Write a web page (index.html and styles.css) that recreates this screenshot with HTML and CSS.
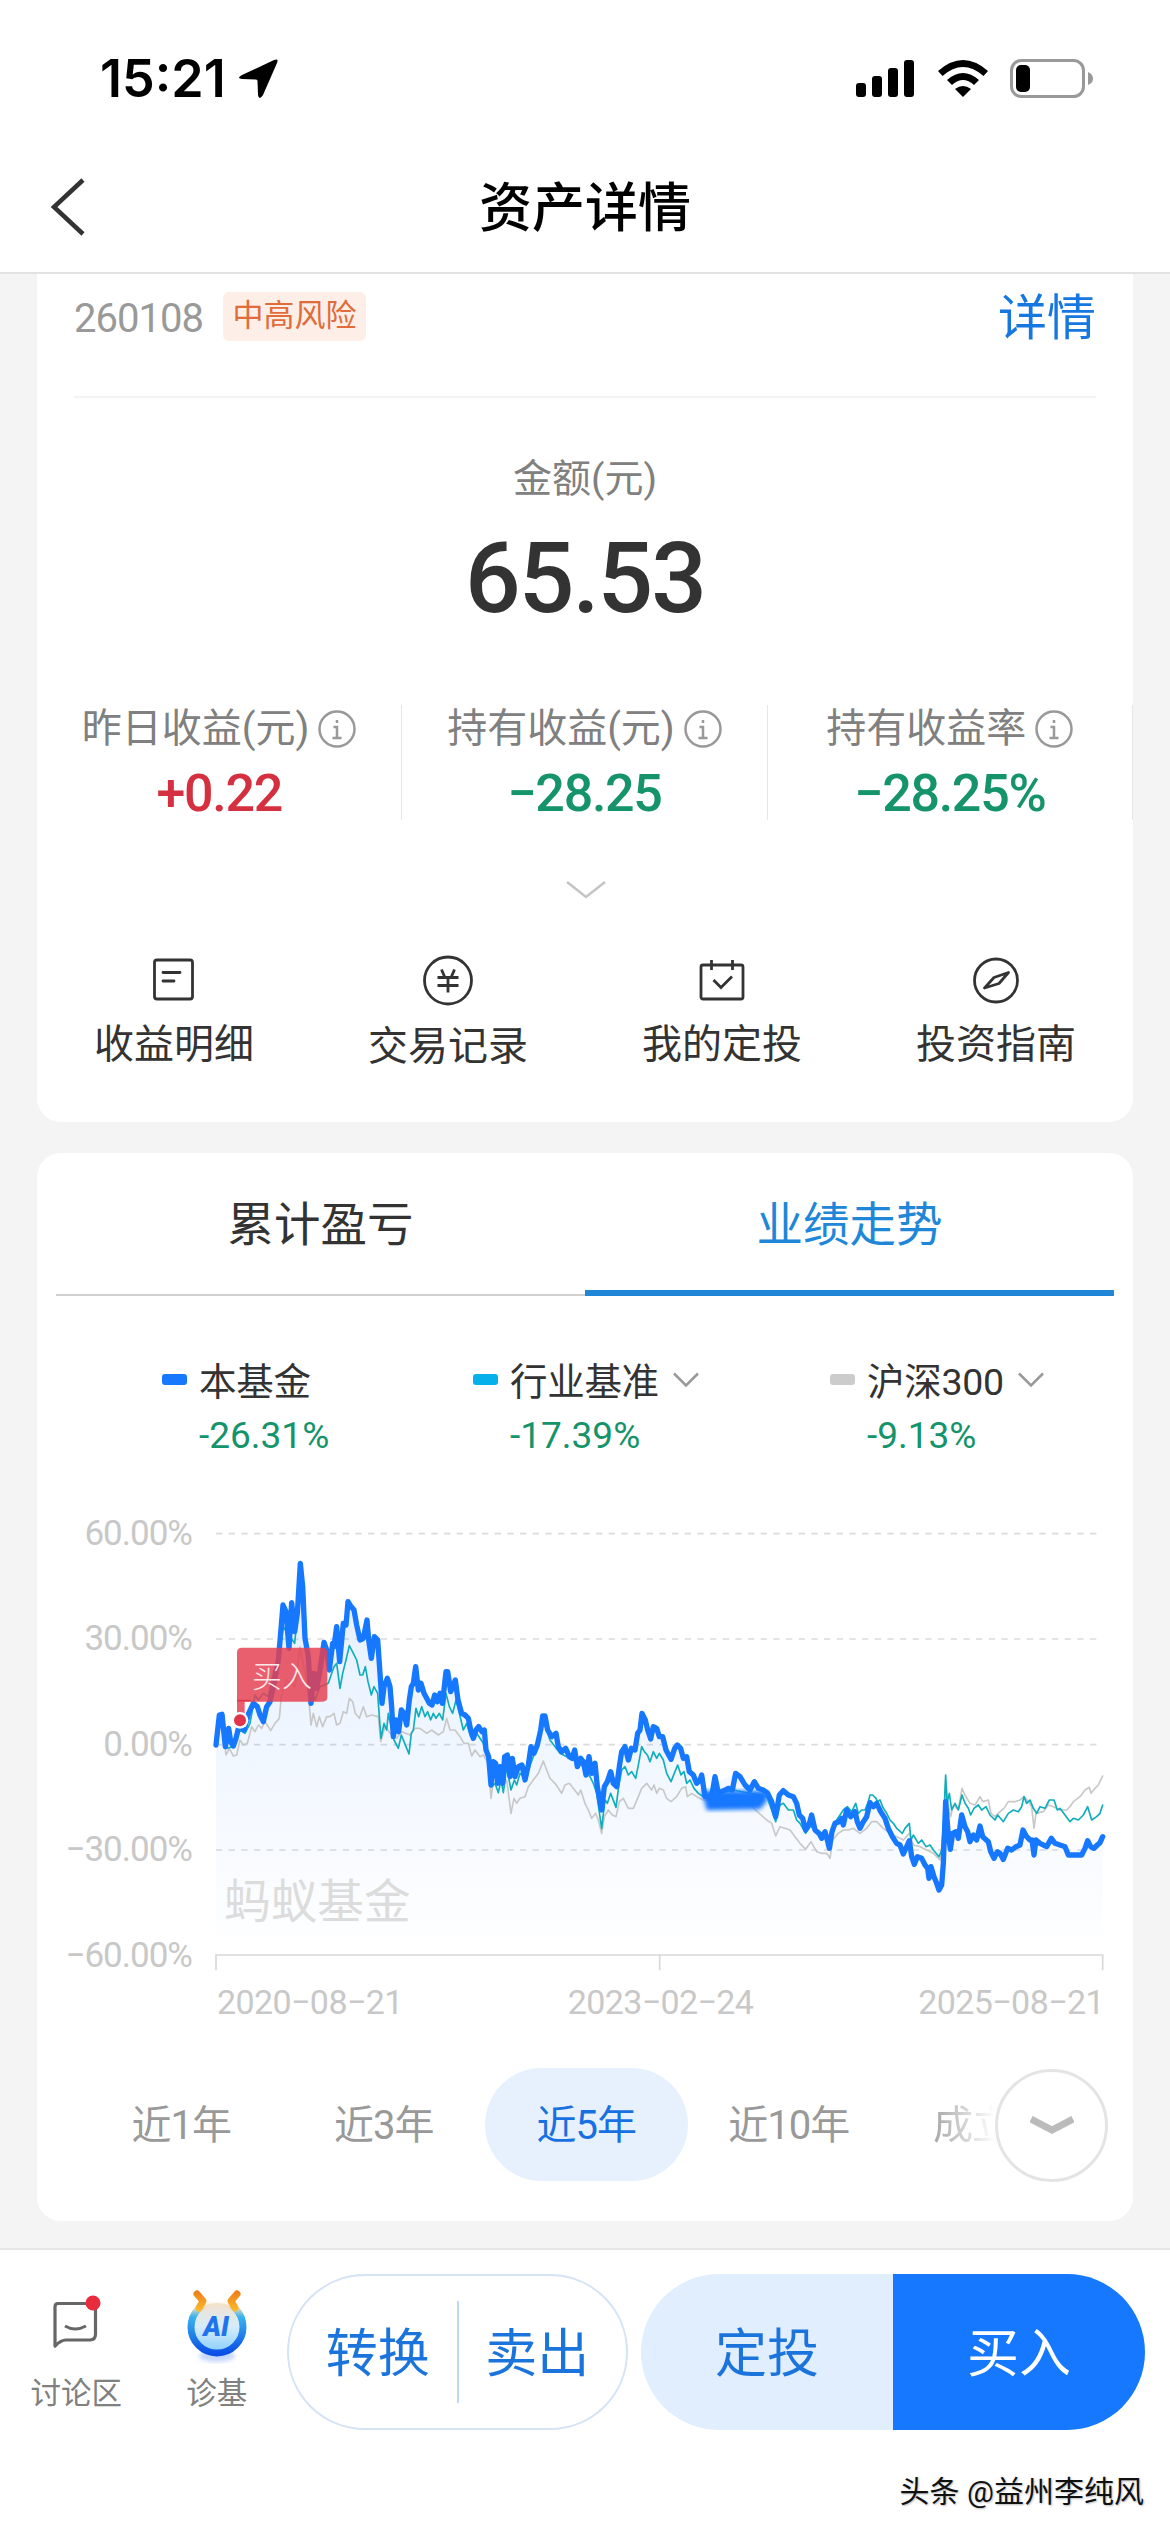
FILE: index.html
```html
<!DOCTYPE html>
<html lang="zh-CN">
<head>
    <meta charset="UTF-8">
    <meta name="viewport" content="width=device-width, initial-scale=1.0">
    <title>资产详情</title>
    <link rel="stylesheet" href="styles.css">
</head>
<body>
    <div class="status-bar">
        <div class="status-left">
            <span class="time">15:21</span>
            <svg width="42" height="42" viewBox="0 0 42 42"><path d="M37 2 Q42 0 40 5 L26 37 Q22 43 21 37 L20.500 23 Q20.500 21.500 19 21.500 L5 21 Q-1 20 5 17 Z" fill="#000"/></svg>
        </div>
        <div class="status-right">
            <svg width="58" height="38" viewBox="0 0 58 38">
                <rect x="0" y="23" width="10" height="14" rx="3"/>
                <rect x="16" y="16" width="10" height="21" rx="3"/>
                <rect x="32" y="8" width="10" height="29" rx="3"/>
                <rect x="48" y="0" width="10" height="37" rx="3"/>
            </svg>
            <svg class="wifi" width="50" height="38" viewBox="0 0 50 38">
                <path d="M0 11 Q25 -11 50 11 L45.500 16 Q25 -2 4.500 16 Z"/>
                <path d="M9 20 Q25 6 41 20 L36 25 Q25 15 14 25 Z"/>
                <path d="M17 29 Q25 23 33 29 L25 37 Z"/>
            </svg>
            <svg width="83" height="40" viewBox="0 0 83 40">
                <rect x="1.500" y="1.500" width="72" height="36" rx="10" fill="none" stroke="#999" stroke-width="3"/>
                <rect x="6" y="6" width="14" height="27" rx="5"/>
                <path d="M78 13 Q83 15 83 19.500 Q83 24 78 26 Z" fill="#999"/>
            </svg>
        </div>
    </div>

    <div class="nav">
        <svg class="back" width="36" height="60" viewBox="0 0 36 60"><path d="M33 3 L4 30 L33 57" fill="none" stroke="#333" stroke-width="4.500"/></svg>
        <h1>资产详情</h1>
    </div>

    <div class="main">
        <div class="card asset">
            <div class="fund-row">
                <span class="code">260108</span>
                <span class="risk">中高风险</span>
                <a class="detail">详情</a>
            </div>
            <div class="amount-label">金额(元)</div>
            <div class="amount">65.53</div>
            <div class="stats">
                <div class="stat">
                    <div class="stat-label">昨日收益(元)<svg class="info" viewBox="0 0 38 38"><circle cx="19" cy="19" r="17.500"/><path d="M19 10v3M15.500 17h3.500v11M14.500 28h9"/></svg></div>
                    <div class="stat-value up">+0.22</div>
                </div>
                <div class="stat">
                    <div class="stat-label">持有收益(元)<svg class="info" viewBox="0 0 38 38"><circle cx="19" cy="19" r="17.500"/><path d="M19 10v3M15.500 17h3.500v11M14.500 28h9"/></svg></div>
                    <div class="stat-value down">−28.25</div>
                </div>
                <div class="stat">
                    <div class="stat-label">持有收益率<svg class="info" viewBox="0 0 38 38"><circle cx="19" cy="19" r="17.500"/><path d="M19 10v3M15.500 17h3.500v11M14.500 28h9"/></svg></div>
                    <div class="stat-value down">−28.25%</div>
                </div>
            </div>
            <svg class="expand" width="40" height="18" viewBox="0 0 40 18"><path d="M1 1 L20 16 L39 1" fill="none" stroke="#c4c4c4" stroke-width="2.500"/></svg>
            <div class="actions">
                <div class="action">
                    <svg viewBox="0 0 56 56"><rect x="8.500" y="8" width="38" height="39" rx="2.500"/><path d="M17 20.500h17M17 29h11" stroke-linecap="round"/></svg>
                    <span>收益明细</span>
                </div>
                <div class="action">
                    <svg viewBox="0 0 56 56"><circle cx="28" cy="28.500" r="23.500"/><path d="M21.500 17.500l3 7M34.500 17.500l-3 7M17.500 25.500h21M17.500 33.500h21M28 25.500v15"/></svg>
                    <span class="low">交易记录</span>
                </div>
                <div class="action">
                    <svg viewBox="0 0 56 56"><rect x="7" y="13" width="42" height="34" rx="2"/><path d="M17.500 8v10M38.500 8v10M19.500 28l7.500 7.500 11-11"/></svg>
                    <span>我的定投</span>
                </div>
                <div class="action">
                    <svg viewBox="0 0 56 56"><circle cx="28" cy="28.500" r="21.500"/><path d="M40.500 20.500 L26 25.500 L16.500 36 L31 31.500 Z" stroke-linejoin="round"/></svg>
                    <span>投资指南</span>
                </div>
            </div>
        </div>

        <div class="card trend">
            <div class="tabs">
                <div class="tab">累计盈亏</div>
                <div class="tab active">业绩走势</div>
            </div>

            <div class="legend">
                <div class="legend-item">
                    <div class="legend-name"><i class="mark fund"></i>本基金</div>
                    <div class="legend-value">-26.31%</div>
                </div>
                <div class="legend-item wide">
                    <div class="legend-name"><i class="mark bench"></i>行业基准<svg class="caret" viewBox="0 0 26 16"><path d="M1 1.500 L13 13.500 L25 1.500"/></svg></div>
                    <div class="legend-value">-17.39%</div>
                </div>
                <div class="legend-item">
                    <div class="legend-name"><i class="mark index"></i>沪深300<svg class="caret" viewBox="0 0 26 16"><path d="M1 1.500 L13 13.500 L25 1.500"/></svg></div>
                    <div class="legend-value">-9.13%</div>
                </div>
            </div>

            <div class="chart">
                <div class="y-axis">
                    <span>60.00%</span>
                    <span>30.00%</span>
                    <span>0.00%</span>
                    <span>−30.00%</span>
                    <span>−60.00%</span>
                </div>
                <svg class="plot" width="920" height="475" viewBox="0 0 2760 1425">
                    <defs>
                        <linearGradient id="area" gradientUnits="userSpaceOnUse" x1="0" y1="190" x2="0" y2="1365">
                            <stop offset="0" stop-color="#1677ff" stop-opacity="0.12"/>
                            <stop offset="1" stop-color="#1677ff" stop-opacity="0"/>
                        </linearGradient>
                        <filter id="soft"><feGaussianBlur stdDeviation="6"/></filter>
                    </defs>
                    <g class="grid">
                        <path d="M48 101H2708M48 417H2708M48 734H2708M48 1050H2708"/>
                    </g>
                    <path class="axis" d="M48 1411V1365H2708V1411M1379 1365V1411"/>
                    <path fill="url(#area)" d="M48,1365 48,735 58,645 76,740 120,665 146,640 200,620 220,560 235,480 249,315 267,445 275,308 284,395 301,190 315,415 333,610 372,427 388,510 410,380 419,485 444,305 462,330 480,420 501,360 514,475 523,410 533,420 546,610 562,535 580,710 604,630 620,675 647,500 688,610 727,610 738,515 766,540 785,640 820,715 836,680 853,690 873,855 914,770 975,840 1028,648 1075,740 1132,800 1175,820 1205,930 1232,815 1250,860 1265,755 1305,750 1326,640 1352,717 1388,710 1413,778 1432,735 1468,815 1515,890 1545,850 1607,820 1650,870 1703,880 1727,950 1750,872 1790,910 1817,990 1835,945 1888,1045 1896,995 1940,930 1980,985 2010,908 2030,910 2077,1010 2110,1062 2128,1022 2143,1093 2217,1170 2230,1090 2237,905 2251,1048 2285,945 2310,1025 2340,978 2382,1075 2469,990 2502,1065 2554,1015 2605,1065 2663,1022 2708,1010 2708,1365Z"/>
                    <text class="brand" x="72" y="1253">蚂蚁基金</text>
                    <polyline class="line-index" points="48,735 65,660 78,765 88,745 100,768 110,765 120,720 130,735 142,730 155,680 165,695 175,675 185,685 195,665 205,680 212,692 225,670 238,655 244,590 260,540 285,560 300,440 315,520 325,580 333,675 340,640 350,680 358,650 368,680 380,650 390,650 402,640 410,675 420,670 430,635 440,640 448,595 458,605 466,640 478,655 490,620 500,650 515,645 535,650 542,725 555,680 575,705 590,715 605,695 630,705 645,685 660,685 680,700 695,690 715,705 730,695 740,655 750,690 765,690 780,710 792,730 805,730 815,768 825,750 840,770 850,765 865,790 873,895 880,845 895,840 910,850 920,840 933,940 942,895 950,910 960,895 975,890 985,860 1000,840 1015,820 1030,783 1040,810 1050,835 1065,850 1085,880 1095,855 1108,850 1120,865 1135,885 1142,870 1155,910 1165,930 1175,955 1187,940 1195,960 1205,1000 1213,950 1225,930 1237,945 1248,950 1258,905 1270,895 1285,925 1300,925 1315,890 1325,865 1340,850 1355,870 1362,855 1370,880 1378,865 1390,870 1400,895 1413,905 1430,890 1445,865 1457,860 1462,890 1475,880 1490,890 1510,900 1560,905 1600,885 1650,915 1700,960 1715,970 1727,1008 1740,980 1755,985 1770,990 1785,1010 1800,1030 1817,1048 1833,1025 1850,1055 1865,1060 1880,1060 1890,1075 1898,1020 1915,1000 1930,990 1945,990 1960,985 1980,1000 2000,985 2015,965 2030,965 2050,985 2070,1000 2090,1010 2110,1020 2128,1000 2140,1035 2160,1040 2180,1050 2200,1060 2220,1080 2230,1000 2237,840 2245,920 2252,950 2260,915 2275,930 2286,865 2295,885 2310,910 2325,915 2340,890 2348,905 2365,900 2373,940 2385,950 2400,935 2412,925 2425,905 2445,905 2460,900 2472,890 2485,905 2495,920 2502,985 2508,940 2530,935 2545,915 2560,920 2580,930 2600,930 2610,920 2620,905 2640,890 2655,870 2668,862 2673,880 2685,865 2695,855 2708,828"/>
                    <polyline class="line-bench" points="48,735 60,660 78,745 100,740 120,690 135,700 150,670 165,585 175,600 190,580 205,590 215,540 240,450 250,380 262,400 284,430 301,250 318,420 330,560 345,600 360,560 385,550 395,520 402,500 410,490 420,565 428,520 438,480 448,437 460,460 470,480 480,525 488,525 496,500 504,545 514,585 522,560 533,580 538,650 543,715 552,670 560,690 565,640 575,690 582,720 595,745 604,705 612,725 618,740 627,762 634,700 640,690 648,625 656,650 665,620 675,650 683,635 692,660 700,640 708,655 718,640 728,660 738,580 748,620 758,640 768,600 778,640 790,690 800,670 812,710 830,700 850,730 866,790 875,860 885,850 895,878 903,840 910,878 920,800 933,870 943,840 950,855 960,820 975,835 1000,770 1030,665 1050,720 1080,760 1120,780 1150,800 1170,830 1180,850 1190,880 1197,930 1205,985 1215,900 1222,910 1232,880 1248,922 1256,860 1265,810 1275,800 1285,825 1295,815 1307,835 1316,790 1325,740 1333,755 1342,765 1350,785 1360,755 1370,775 1378,760 1390,780 1400,820 1413,845 1425,815 1433,795 1443,825 1452,815 1460,850 1470,840 1482,865 1495,880 1510,890 1600,870 1700,890 1715,930 1727,965 1740,915 1750,910 1765,930 1780,930 1790,960 1800,970 1817,1000 1830,975 1850,1000 1865,1000 1880,1020 1888,1040 1896,990 1910,960 1930,930 1942,920 1955,935 1967,910 1975,940 1985,930 1995,930 2005,905 2010,885 2018,885 2028,895 2032,905 2040,900 2050,925 2060,940 2070,960 2080,970 2090,985 2107,1000 2115,985 2128,970 2133,1020 2140,1005 2155,1030 2165,1020 2178,1040 2190,1035 2200,1050 2217,1070 2225,1050 2230,980 2237,825 2241,910 2248,880 2255,930 2265,910 2275,930 2286,885 2295,910 2305,925 2312,945 2322,925 2335,915 2345,930 2358,920 2370,945 2385,960 2393,945 2410,965 2425,940 2440,930 2455,935 2465,920 2472,890 2480,910 2490,900 2500,925 2510,940 2520,920 2535,925 2548,900 2562,900 2572,930 2580,925 2595,945 2610,965 2620,955 2635,960 2650,945 2663,920 2675,960 2690,950 2700,940 2708,915"/>
                    <polyline class="line-fund" points="48,735 58,645 66,643 76,740 86,685 92,725 100,738 108,715 120,665 132,690 146,640 160,610 172,620 180,645 190,665 200,620 210,605 220,560 235,480 242,400 249,315 258,335 267,445 275,308 284,395 292,340 301,190 308,260 315,415 325,470 333,610 342,520 350,565 360,510 372,427 380,450 388,510 398,430 402,440 410,380 419,485 430,370 438,375 444,305 452,318 462,330 470,375 480,420 490,415 501,360 506,420 514,475 523,410 533,420 540,520 546,610 552,560 562,535 570,560 575,620 580,710 588,660 596,695 604,630 612,640 620,675 628,600 634,560 640,550 647,500 655,570 663,550 672,580 680,595 688,610 696,615 704,585 712,605 720,580 727,610 733,560 738,515 743,515 752,575 760,555 766,540 774,600 785,640 795,645 805,655 812,690 820,715 828,690 836,680 846,695 853,690 858,750 866,770 873,855 880,785 887,790 893,850 900,800 908,850 914,770 922,765 930,830 937,775 945,830 955,800 966,795 975,840 985,795 993,740 1002,760 1012,735 1022,690 1028,648 1035,648 1043,690 1055,710 1068,700 1075,740 1085,755 1097,745 1108,770 1116,775 1124,750 1132,800 1142,775 1150,785 1158,825 1167,770 1175,820 1185,790 1192,860 1199,900 1205,930 1213,860 1222,845 1232,815 1240,850 1250,860 1258,800 1265,755 1275,740 1285,780 1294,745 1305,750 1313,700 1320,690 1326,640 1336,660 1343,690 1352,717 1360,680 1370,685 1378,710 1388,710 1398,750 1413,778 1424,745 1432,735 1442,745 1450,775 1460,770 1468,815 1480,825 1490,850 1500,840 1505,825 1515,890 1535,890 1545,830 1555,880 1585,865 1597,870 1607,820 1620,830 1635,855 1650,870 1663,845 1675,865 1690,870 1703,880 1715,905 1727,950 1738,885 1750,872 1765,885 1780,890 1790,910 1798,945 1808,955 1817,990 1827,975 1835,945 1845,990 1857,1000 1865,1015 1875,995 1882,1020 1888,1045 1896,995 1905,970 1917,965 1925,955 1930,975 1940,930 1952,950 1965,935 1972,965 1980,985 1990,965 2000,950 2010,908 2020,920 2030,910 2042,935 2055,955 2065,985 2077,1010 2090,1030 2100,1035 2110,1062 2120,1040 2128,1022 2135,1070 2143,1093 2152,1070 2165,1075 2175,1095 2183,1105 2187,1135 2193,1100 2202,1130 2210,1150 2217,1170 2225,1155 2230,1090 2237,905 2244,995 2251,1048 2258,1000 2268,995 2275,1015 2285,945 2295,980 2303,995 2310,1025 2320,1005 2330,1020 2340,978 2348,1010 2365,1025 2372,1055 2382,1075 2392,1055 2400,1060 2410,1078 2423,1045 2435,1050 2448,1040 2460,1035 2469,990 2480,1010 2490,1020 2496,1020 2502,1065 2508,1020 2520,1030 2540,1040 2554,1015 2565,1030 2580,1035 2595,1040 2605,1065 2620,1065 2645,1065 2655,1045 2663,1022 2672,1040 2682,1045 2692,1035 2700,1028 2708,1010"/>
                    <path class="smudge" d="M1505 872 L1703 872 L1700 905 L1680 928 L1520 931 Z" filter="url(#soft)"/>
                    <path class="flag" d="M126 443H368Q382 443 382 457V591Q382 605 368 605H134V640H111V458Q111 443 126 443Z"/>
                    <path class="flag-line" d="M111 602H152"/>
                    <text class="flag-text" x="156" y="561">买入</text>
                    <circle cx="120" cy="661" r="25" fill="#fff"/>
                    <circle cx="120" cy="661" r="18" fill="#e1354a"/>
                </svg>
            </div>
            <div class="x-axis">
                <span>2020−08−21</span>
                <span>2023−02−24</span>
                <span>2025−08−21</span>
            </div>

            <div class="ranges">
                <div class="range">近1年</div>
                <div class="range">近3年</div>
                <div class="range active">近5年</div>
                <div class="range">近10年</div>
                <div class="range last">成立</div>
                <div class="more"><svg width="44" height="22" viewBox="0 0 44 22"><path d="M1 4 L22 15 L43 4" fill="none" stroke="#bbb" stroke-width="7"/></svg></div>
            </div>
        </div>
    </div>

    <div class="bottom-bar">
        <div class="tool">
            <svg width="64" height="76" viewBox="0 0 64 76">
                <path d="M14 15.500 H46 Q51.500 15.500 51.500 21 V46 Q51.500 52 46 52 H22 Q17 52 11 58 V19 Q11 15.500 14 15.500Z" fill="none" stroke="#666" stroke-width="3.200" stroke-linejoin="round"/>
                <path d="M21 38 Q31 44 42 38" fill="none" stroke="#666" stroke-width="3"/>
                <circle cx="49" cy="15" r="7.500" fill="#e92b3d"/>
            </svg>
            <span>讨论区</span>
        </div>
        <div class="tool">
            <svg width="64" height="76" viewBox="0 0 64 76">
                <defs>
                    <linearGradient id="ring" x1="0" y1="0" x2="0" y2="1"><stop offset="0" stop-color="#f6e6cf" stop-opacity="0"/><stop offset="0.120" stop-color="#f6dcb4"/><stop offset="0.300" stop-color="#39b4ee"/><stop offset="1" stop-color="#0a4fe6"/></linearGradient>
                    <linearGradient id="face" x1="0" y1="0" x2="0" y2="1"><stop offset="0" stop-color="#f3e2cf"/><stop offset="0.500" stop-color="#d5ecfb"/><stop offset="1" stop-color="#8fd0fb"/></linearGradient>
                    <linearGradient id="horn" gradientUnits="userSpaceOnUse" x1="0" y1="3" x2="0" y2="22"><stop offset="0" stop-color="#ee7d18"/><stop offset="1" stop-color="#fbb92c"/></linearGradient>
                    <filter id="glow"><feGaussianBlur stdDeviation="2"/></filter>
                </defs>
                <ellipse cx="32" cy="68" rx="18" ry="6" fill="#c5d6fb" filter="url(#glow)"/>
                <circle cx="32" cy="39" r="24" fill="url(#face)"/>
                <circle cx="32" cy="39" r="26" fill="none" stroke="url(#ring)" stroke-width="7"/>
                <path d="M12 6 L18 13 L14 20 M52 6 L46 13 L50 20" fill="none" stroke="url(#horn)" stroke-width="7" stroke-linecap="round" stroke-linejoin="round"/>
                <text x="31" y="48" class="ai">AI</text>
            </svg>
            <span>诊基</span>
        </div>
        <div class="pill outline">
            <div class="btn">转换</div>
            <div class="btn">卖出</div>
        </div>
        <div class="pill solid">
            <div class="btn light">定投</div>
            <div class="btn primary">买入</div>
        </div>
        <div class="author">头条 @益州李纯风</div>
    </div>
</body>
</html>
```
FILE: styles.css
```css
* {
    box-sizing: border-box;
    margin: 0;
    padding: 0;
}

body {
    width: 1170px;
    height: 2532px;
    overflow: hidden;
    background: #fff;
    color: #333;
    font-family: Roboto, "Noto Sans CJK SC", sans-serif;
}

svg {
    display: block;
    flex-shrink: 0;
}

.status-bar {
    height: 141px;
    padding: 16px 77px 0 100px;
    display: flex;
    justify-content: space-between;
    align-items: center;
}

.status-left,
.status-right {
    display: flex;
    align-items: center;
}

.time {
    width: 137px;
    font-family: Inter, sans-serif;
    font-weight: 600;
    font-size: 52px;
    letter-spacing: 0;
    color: #000;
}

.wifi {
    margin: 0 22px 0 24px;
}

.nav {
    height: 133px;
    padding-top: 5px;
    border-bottom: 2px solid #e2e2e2;
    display: flex;
    align-items: center;
    justify-content: center;
    position: relative;
}

.nav h1 {
    font-size: 53px;
    font-weight: 500;
    line-height: 60px;
    color: #000;
}

.back {
    position: absolute;
    left: 50px;
    top: 36px;
}

.main {
    height: 1974px;
    padding: 0 37px;
    background: #f4f4f4;
}

.card {
    background: #fff;
    border-radius: 24px;
}

.asset {
    height: 848px;
    border-radius: 0 0 24px 24px;
}

.fund-row {
    height: 124px;
    margin: 0 37px;
    padding-bottom: 38px;
    border-bottom: 2px solid #f3f3f3;
    display: flex;
    align-items: center;
}

.code {
    width: 149px;
    padding-top: 4px;
    font-size: 40px;
    letter-spacing: -1px;
    color: #999;
}

.risk {
    width: 143px;
    height: 49px;
    border-radius: 6px;
    background: #fdeee8;
    color: #df6c3a;
    font-size: 31px;
    line-height: 48px;
    text-align: center;
}

.detail {
    margin-left: auto;
    padding-top: 6px;
    font-size: 49px;
    line-height: 60px;
    color: #1777e0;
}

.amount-label {
    margin-top: 51px;
    font-size: 39px;
    line-height: 60px;
    text-align: center;
    color: #808080;
}

.amount {
    margin-top: 20px;
    font-size: 98px;
    font-weight: 500;
    line-height: 100px;
    letter-spacing: -2px;
    text-align: center;
}

.stats {
    height: 115px;
    margin-top: 76px;
    display: flex;
}

.stat {
    flex: 1;
    border-right: 1px solid #e6e6e6;
}

.stat-label {
    padding-top: 1px;
    display: flex;
    justify-content: center;
    align-items: center;
    font-size: 40px;
    line-height: 46px;
    white-space: nowrap;
    color: #808080;
}

.info {
    width: 38px;
    height: 38px;
    margin-left: 9px;
    fill: none;
    stroke: #999;
    stroke-width: 2.5;
}

.stat-value {
    margin-top: 10px;
    font-size: 52px;
    font-weight: 500;
    line-height: 64px;
    letter-spacing: -1.3px;
    text-align: center;
}

.up {
    color: #d5303f;
}

.down {
    color: #15946b;
}

.expand {
    margin: 61px auto 0;
    position: relative;
    left: 1px;
}

.actions {
    margin-top: 53px;
    display: flex;
}

.action {
    flex: 1;
    display: flex;
    flex-direction: column;
    align-items: center;
    gap: 12px;
    font-size: 40px;
    line-height: 50px;
}

.action .low {
    padding-top: 2px;
}

.action svg {
    width: 56px;
    height: 56px;
    fill: none;
    stroke: #333;
    stroke-width: 2.8;
}

.trend {
    height: 1068px;
    margin-top: 31px;
    overflow: hidden;
}

.tabs {
    height: 144px;
    margin: 0 19px;
    display: flex;
}

.tab {
    flex: 1;
    height: 143px;
    border-bottom: 2px solid #d0d0d0;
    font-size: 46.5px;
    line-height: 144px;
    text-align: center;
}

.tab.active {
    border-bottom: 6px solid #2087d8;
    color: #2087d8;
}

.legend {
    margin-top: 60px;
    padding-left: 125px;
    display: flex;
}

.legend-item {
    width: 311px;
    flex-shrink: 0;
}

.legend-item.wide {
    width: 357px;
}

.legend-name {
    display: flex;
    align-items: center;
    font-size: 37.5px;
    line-height: 50px;
    letter-spacing: -0.3px;
    white-space: nowrap;
}

.mark {
    width: 25px;
    height: 11px;
    margin: -6px 12px 0 0;
    border-radius: 3px;
}

.fund {
    background: #1677ff;
}

.bench {
    background: #06b0ea;
}

.index {
    background: #ccc;
}

.caret {
    width: 26px;
    height: 16px;
    margin: -4px 0 0 14px;
    fill: none;
    stroke: #999;
    stroke-width: 2.5;
}

.legend-value {
    margin: 4px 0 0 37px;
    font-size: 37px;
    line-height: 50px;
    letter-spacing: 0;
    color: #15946b;
}

.chart {
    height: 494px;
    margin-top: 20px;
    display: flex;
}

.y-axis {
    width: 155px;
    flex-shrink: 0;
    display: flex;
    flex-direction: column;
    font-size: 35px;
    line-height: 105.4px;
    letter-spacing: -1px;
    text-align: right;
    white-space: nowrap;
    color: #c8c8c8;
}

.plot {
    margin: 19px 0 0 8px;
}

.grid path {
    fill: none;
    stroke: #dcdcdc;
    stroke-width: 5;
    stroke-dasharray: 19 19;
}

.axis {
    fill: none;
    stroke: #d8d8d8;
    stroke-width: 5;
}

.brand {
    font-size: 140px;
    font-weight: 400;
    fill: #dcdcdc;
}

.line-index,
.line-bench,
.line-fund {
    fill: none;
    stroke-linejoin: round;
    stroke-linecap: round;
}

.line-index {
    stroke: #c8c8c8;
    stroke-width: 5;
}

.line-bench {
    stroke: #10aebd;
    stroke-width: 5;
}

.line-fund {
    stroke: #1677ff;
    stroke-width: 16;
}

.smudge {
    fill: #1677ff;
}

.flag {
    fill: #e63e50;
    fill-opacity: 0.83;
}

.flag-line {
    stroke: #e1354a;
    stroke-width: 5;
}

.flag-text {
    font-size: 90px;
    font-weight: 300;
    fill: #fde8ea;
}

.x-axis {
    margin: 2px 29px 0 180px;
    display: flex;
    justify-content: space-between;
    font-size: 34px;
    line-height: 50px;
    letter-spacing: -0.6px;
    color: #c8c8c8;
}

.ranges {
    height: 113px;
    margin-top: 41px;
    padding-left: 43px;
    display: flex;
    position: relative;
}

.range {
    width: 202.5px;
    border-radius: 57px;
    font-size: 40px;
    line-height: 116px;
    letter-spacing: -1px;
    text-align: center;
    color: #999;
}

.range.active {
    background: #e7f1fe;
    color: #1970e0;
}

.range.last {
    padding-left: 43px;
    text-align: left;
    background: linear-gradient(90deg, #aaa 45px, #fff 105px);
    background-clip: text;
    -webkit-background-clip: text;
    color: transparent;
}

.more {
    position: absolute;
    right: 25px;
    top: 1px;
    width: 113px;
    height: 113px;
    border: 3px solid #e4e4e4;
    border-radius: 50%;
    background: #fff;
    display: flex;
    align-items: center;
    justify-content: center;
}

.bottom-bar {
    height: 284px;
    padding: 24px 25px 0 6px;
    border-top: 2px solid #e6e6e6;
    display: flex;
    align-items: flex-start;
    position: relative;
}

.tool {
    width: 140.5px;
    padding-top: 14px;
    display: flex;
    flex-direction: column;
    align-items: center;
    font-size: 30.5px;
    line-height: 50px;
    color: #808080;
}

.tool span {
    margin-top: 5px;
}

.ai {
    font-family: Roboto, sans-serif;
    font-size: 27px;
    font-weight: 900;
    font-style: italic;
    text-anchor: middle;
    fill: #1f74ee;
}

.pill {
    height: 156px;
    border-radius: 78px;
    display: flex;
    align-items: center;
    overflow: hidden;
    font-size: 52px;
    color: #1a74dc;
}

.btn {
    flex: 1;
    text-align: center;
}

.outline {
    width: 341px;
    padding: 0 10px;
    border: 2px solid #d5e3f6;
}

.outline .btn {
    height: 102px;
    line-height: 107px;
}

.outline .btn + .btn {
    border-left: 2px solid #bcdaf6;
}

.solid {
    width: 504px;
    margin-left: 13px;
}

.solid .btn {
    height: 156px;
    line-height: 161px;
}

.light {
    background: #e1eefd;
}

.primary {
    background: #1677ff;
    color: #fff;
}

.author {
    position: absolute;
    right: 26px;
    bottom: 20px;
    font-size: 30px;
    line-height: 40px;
    color: #111;
    text-shadow: 1px 1px 2px #bbb;
}
```
